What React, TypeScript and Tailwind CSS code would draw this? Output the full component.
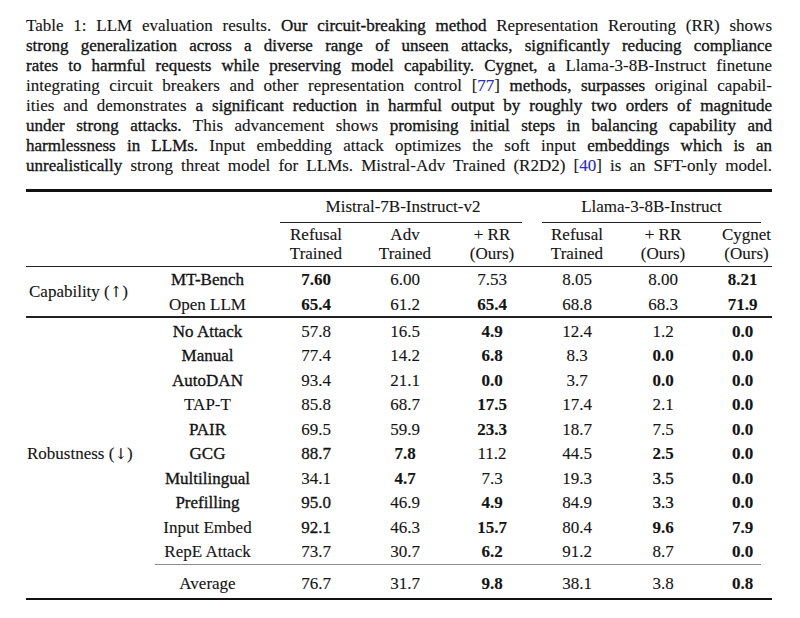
const COLS = 'grid grid-cols-[124px_115px_102px_76px_98px_72px_100px_59px]'
const HEAVY = '[-webkit-text-stroke:0.32px_#111]'

// '*' = bold value, '~' = heavier ink in the scan
const CAPABILITY: Array<[string, string[]]> = [
  ['~MT-Bench', ['*7.60', '6.00', '7.53', '8.05', '8.00', '*8.21']],
  ['Open LLM', ['*65.4', '61.2', '*65.4', '68.8', '68.3', '*71.9']],
]

const ROBUSTNESS: Array<[string, string[]]> = [
  ['~No Attack', ['57.8', '16.5', '*4.9', '12.4', '1.2', '*0.0']],
  ['~Manual', ['77.4', '14.2', '*6.8', '8.3', '*0.0', '*0.0']],
  ['~AutoDAN', ['93.4', '21.1', '*0.0', '3.7', '*0.0', '*0.0']],
  ['TAP-T', ['85.8', '68.7', '*17.5', '17.4', '2.1', '*0.0']],
  ['~PAIR', ['69.5', '59.9', '*23.3', '18.7', '7.5', '*0.0']],
  ['~GCG', ['~88.7', '*7.8', '11.2', '44.5', '*2.5', '*0.0']],
  ['~Multilingual', ['34.1', '*4.7', '7.3', '19.3', '~3.5', '*0.0']],
  ['~Prefilling', ['~95.0', '46.9', '*4.9', '84.9', '~3.3', '*0.0']],
  ['Input Embed', ['~92.1', '46.3', '*15.7', '80.4', '*9.6', '*7.9']],
  ['RepE Attack', ['73.7', '30.7', '*6.2', '91.2', '8.7', '*0.0']],
]

const AVERAGE: [string, string[]] = ['Average', ['76.7', '31.7', '*9.8', '38.1', '3.8', '*0.8']]

function Cell({ v }: { v: string }) {
  if (v.startsWith('*')) return <div className="text-center font-bold">{v.slice(1)}</div>
  if (v.startsWith('~')) return <div className={`text-center ${HEAVY}`}>{v.slice(1)}</div>
  return <div className="text-center">{v}</div>
}

function H({ children }: { children: React.ReactNode }) {
  return <span className={HEAVY}>{children}</span>
}

function Cite({ n }: { n: string }) {
  return (
    <span>
      [<span className="text-[#2b2bd0]">{n}</span>]
    </span>
  )
}

function Arrow({ c }: { c: string }) {
  return <span className="font-['DejaVu_Serif',serif] text-[15px]">{c}</span>
}

function Line({ children }: { children: React.ReactNode }) {
  return <div className="text-justify [text-align-last:justify]">{children}</div>
}

function DataRow({ label, name, vals }: { label?: React.ReactNode; name: string; vals: string[] }) {
  return (
    <div className={`${COLS} h-[24.5px] items-center`}>
      <div className="pl-[1px]">{label}</div>
      <Cell v={name} />
      {vals.map((v, i) => (
        <Cell key={i} v={v} />
      ))}
    </div>
  )
}

export default function App() {
  return (
    <div className="w-[800px] h-[618px] bg-white text-[#141414] font-['Liberation_Serif','Times_New_Roman',serif] overflow-hidden [-webkit-text-stroke:0.12px_#141414]">
      <div className="ml-[26px] w-[746px] pt-[16px]">
        <div className="text-[17px] leading-[20px]">
          <Line>
            Table 1: LLM evaluation results. <H>Our circuit-breaking method</H> Representation Rerouting (RR) shows
          </Line>
          <Line>
            <H>strong generalization across a diverse range of unseen attacks, significantly reducing compliance</H>
          </Line>
          <Line>
            <H>rates to harmful requests while preserving model capability. Cygnet, a</H> Llama-3-8B-Instruct finetune
          </Line>
          <Line>
            integrating circuit breakers and other representation control <Cite n="77" /> <H>methods, surpasses</H> original capabil-
          </Line>
          <Line>
            ities and demonstrates <H>a significant reduction in harmful output by roughly two orders of magnitude</H>
          </Line>
          <Line>
            <H>under strong attacks.</H> This advancement shows <H>promising initial steps in balancing capability and</H>
          </Line>
          <Line>
            <H>harmlessness in LLMs.</H> Input embedding attack optimizes the soft input <H>embeddings which is an</H>
          </Line>
          <Line>
            <H>unrealistically</H> strong threat model for LLMs. Mistral-Adv Trained (R2D2) <Cite n="40" /> is an SFT-only model.
          </Line>
        </div>

        <div className="mt-[13px] text-[17px]">
          <div className="h-[2.5px] bg-[#111]" />

          {/* group headers */}
          <div className={`${COLS} leading-[20px]`}>
            <div className="col-span-2" />
            <div className="col-span-3 pt-[5px]">
              <div className="text-center">Mistral-7B-Instruct-v2</div>
              <div className="mt-[5px] ml-[15px] mr-[19px] h-[1px] bg-[#222]" />
            </div>
            <div className="col-span-3 pt-[5px]">
              <div className="text-center pr-[10px]">Llama-3-8B-Instruct</div>
              <div className="mt-[5px] ml-[1px] mr-[11px] h-[1px] bg-[#222]" />
            </div>
          </div>

          <div className={`${COLS} leading-[19px] pt-[2.5px] pb-[2.5px] text-center`}>
            <div className="col-span-2" />
            <div>Refusal<br />Trained</div>
            <div>Adv<br />Trained</div>
            <div>+ RR<br />(Ours)</div>
            <div>Refusal<br />Trained</div>
            <div>+ RR<br />(Ours)</div>
            <div className="pl-[8px]">Cygnet<br />(Ours)</div>
          </div>

          <div className="h-[1.5px] bg-[#222]" />

          {/* capability */}
          <div className="relative">
            {CAPABILITY.map(([name, vals]) => (
              <DataRow key={name} name={name} vals={vals} />
            ))}
            <div className="absolute left-[3px] top-0 h-full flex items-center">
              <span>
                Capability (<Arrow c="↑" />)
              </span>
            </div>
          </div>

          <div className="h-[1.5px] bg-[#222]" />

          {/* robustness */}
          <div className="pt-[1px]">
            {ROBUSTNESS.map(([name, vals]) => (
              <DataRow
                key={name}
                label={name === '~GCG' ? <span>Robustness (<Arrow c="↓" />)</span> : undefined}
                name={name}
                vals={vals}
              />
            ))}
          </div>

          <div className="ml-[129px] mr-[11px] h-[1px] bg-[#8a8a8a]" />

          <div className={`${COLS} pt-[8px] pb-[4px] leading-[21px]`}>
            <div />
            <Cell v={AVERAGE[0]} />
            {AVERAGE[1].map((v, i) => (
              <Cell key={i} v={v} />
            ))}
          </div>

          <div className="h-[2.5px] bg-[#111]" />
        </div>
      </div>
    </div>
  )
}
